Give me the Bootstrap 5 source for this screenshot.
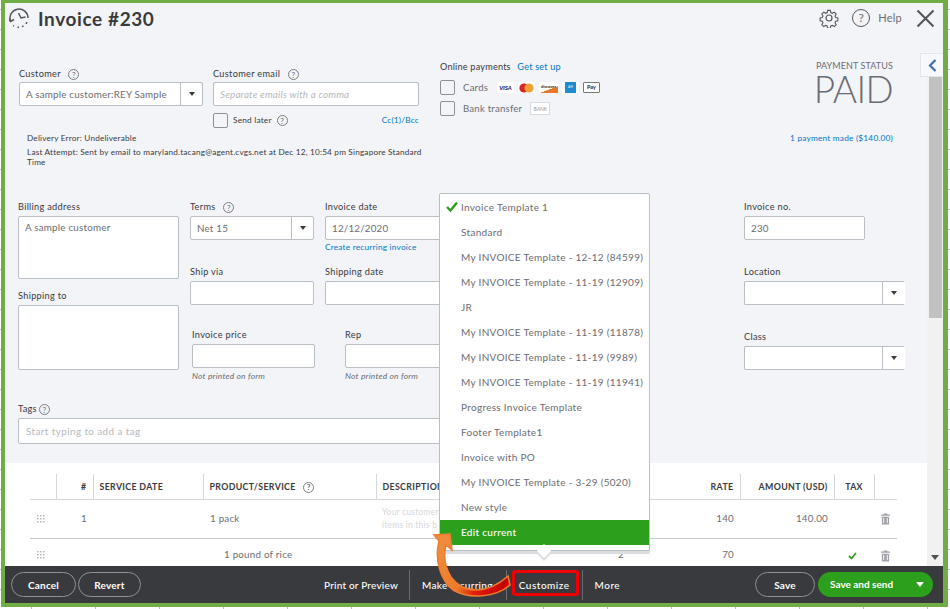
<!doctype html>
<html lang="en">
<head>
<meta charset="utf-8">
<title>Invoice #230</title>
<link rel="stylesheet" href="https://cdn.jsdelivr.net/npm/bootstrap@5.3.0/dist/css/bootstrap.min.css">
<style>
html,body{height:100%;overflow:hidden}
body{font-family:"Lato","Liberation Sans",sans-serif;font-size:9.6px;color:#393a3d;letter-spacing:.22px;line-height:1.2;
 background-color:#fff;background-image:repeating-linear-gradient(90deg,transparent 0 31px,#bbb 31px 32px,transparent 32px 64px),repeating-linear-gradient(0deg,transparent 0 19px,#bbb 19px 20px)}
.qb-frame{position:relative;width:947px;height:607px;margin-left:1px;border:solid #70ad47;border-width:3px 5px 5px 4px;background:#f3f4f8}
.qb-head{height:50px;padding:4px 8px 0 4px;display:flex;align-items:flex-start}
.qb-main{height:513px;overflow:hidden;display:flex}
.qb-content{width:922px;flex:none}
.qb-form{height:410px;background:#f3f4f8}
.qb-title{font-size:19px;font-weight:700;margin:0 0 0 7px;letter-spacing:.6px;color:#393a3d;line-height:24px}
.qb-tools{color:#6b6c72;font-size:11px;height:22px}
.qb-secA{height:146px;padding-left:14px;display:flex}
.qb-lab{display:block;height:17px;line-height:15px;margin:0;font-size:9.2px;color:#393a3d;letter-spacing:.3px;white-space:nowrap}
.qb-input{display:block;width:100%;height:24px;background:#fff;border:1px solid #babec5;border-radius:2px;font-size:9.8px;line-height:22px;padding:0 6px;color:#6b6c72;white-space:nowrap;overflow:hidden;letter-spacing:.2px}
.qb-ph{color:#b4b7bd;font-style:italic}
.qb-sel{display:flex;height:24px;background:#fff;border:1px solid #babec5;border-radius:2px;font-size:9.8px;line-height:22px;color:#6b6c72;letter-spacing:.2px}
.qb-open{border-right-color:#fff}
.qb-sel>span:first-child{flex:1 1 auto;padding-left:6px;white-space:nowrap;overflow:hidden}
.qb-car{flex:0 0 22px;border-left:1px solid #babec5;display:flex;align-items:center;justify-content:center}
.qb-car::after{content:"";border:3.5px solid transparent;border-top:4px solid #393a3d;border-bottom:0}
.qb-q{display:inline-flex;width:11px;height:11px;border:1px solid #7c7e84;border-radius:50%;font-size:8px;line-height:1;align-items:center;justify-content:center;color:#6b6c72;letter-spacing:0;vertical-align:middle;margin-left:5px}
.qb-box{display:block;width:15px;height:15px;border:1px solid #8d9096;border-radius:2px;background:#f3f4f8;flex:none}
.qb-link{color:#0077c5;text-decoration:none}
.qb-small{font-size:8.3px;letter-spacing:.2px}
.qb-note{font-size:8.2px;letter-spacing:.2px;line-height:10px;color:#393a3d;padding-left:8px;width:408px}
.qb-c1{width:184px}.qb-c2{width:206px;margin-left:10px}.qb-c3{margin-left:13px;width:240px}
.qb-status{margin-left:auto;margin-right:34px;text-align:right;width:200px;padding-top:8px}
.qb-status-t{font-size:9px;color:#6b6c72;letter-spacing:.1px}
.qb-paid{font-size:37px;font-weight:300;color:#6b6c72;line-height:36px;letter-spacing:-.6px;margin-top:-1px}
.qb-logo{display:inline-flex;align-items:center;justify-content:center;width:17px;height:11px;background:#fff;font-size:6px;font-weight:900;letter-spacing:0;overflow:hidden}
.qb-secB{height:202px;padding-left:13px;display:flex}
.qb-bc1{width:161px}.qb-bc2{width:124px;margin-left:11px}.qb-bc3{width:124px;margin-left:11px}.qb-bc4{width:161px;margin-left:275px}
.qb-ta{border:1px solid #babec5;border-radius:2px;background:#fff;padding:5px 6px;font-size:9.8px;color:#6b6c72}
.qb-hint{font-size:8.4px;font-style:italic;color:#6b6c72;margin-top:3px;white-space:nowrap}
.qb-tagrow{padding-left:13px}
.qb-tags{height:26px;width:600px;line-height:24px;color:#b4b7bd;padding-left:7px;letter-spacing:.45px}
.qb-lines{height:103px;background:#fff;padding:11px 0 0 25px;overflow:hidden}
.qb-tbl{table-layout:fixed;width:867px;border-collapse:collapse;margin:0;font-size:9.8px}
.qb-tbl th{height:25px;padding:2px 6px 0;font-size:8.8px;font-weight:700;color:#393a3d;letter-spacing:.35px;border-bottom:1px solid #d4d7dc;border-right:1px solid #d4d7dc;white-space:nowrap;overflow:hidden;vertical-align:middle;background:#fff}
.qb-tbl th:last-child{border-right:0}
.qb-tbl td{height:39px;padding:0 6px;border-bottom:1px solid #c4c6ca;white-space:nowrap;overflow:hidden;background:#fff;color:#6b6c72;vertical-align:middle}
.qb-tbl tr.qb-short td{height:34px;border-bottom:0}
.qb-tbl td.qb-drag{padding-left:7px;line-height:0}
.qb-bar{width:16px;flex:none;background:#f1f1f1;position:relative}
.qb-thumb{margin:24px 1px 0 2px;height:241px;background:#c1c1c1}
.qb-down{position:absolute;left:4px;bottom:6px;border:4px solid transparent;border-top:5px solid #505050;border-bottom:0}
.qb-foot{height:37px;background:#393a3d;color:#fff;padding:0 10px 0 6px;display:flex;align-items:center;font-size:10px;font-weight:500;letter-spacing:.2px}
.qb-pill{height:25px;border:1px solid #8d9096;border-radius:13px;background:transparent;color:#fff;font-size:10px;font-weight:700;padding:0;line-height:22px;letter-spacing:.2px}
.qb-sep{width:1px;height:30px;background:#6b6c72}
.qb-act{padding:0 12px;white-space:nowrap;position:relative}
.qb-act-w{letter-spacing:.3px;padding-right:13px}
.qb-act-c{letter-spacing:.5px}
.qb-green{height:25px;width:115px;border:0;border-radius:13px;background:#2ca01c;color:#fff;font-size:10px;font-weight:700;display:flex;align-items:center;justify-content:space-between;padding:0 9px 0 12px}
.qb-green i{border:4px solid transparent;border-top:5px solid #fff;border-bottom:0}
.qb-menu{position:absolute;left:434px;top:190px;width:211px;height:358px;display:block;margin:0;padding:1px 0 0;border:1px solid #babec5;border-radius:2px;background:#fff;box-shadow:0 3px 0 #dcdde0;min-width:0;z-index:5}
.qb-menu .dropdown-item{height:25px;line-height:25px;padding:0 0 0 21px;color:#6b6c72;font-size:10px;letter-spacing:.3px;position:relative}
.qb-menu .dropdown-item.active{background:#2ca01c;color:#fff;font-weight:500}
.qb-tick{position:absolute;left:6px;top:6px}
.qb-nub{position:absolute;left:99px;bottom:-6px;width:10px;height:10px;background:#fff;transform:rotate(45deg);box-shadow:2px 2px 0 #dcdde0}
.qb-tab{position:absolute;left:915px;top:50px;width:23px;height:24px;background:#f7f8fb;border:1px solid #e3e5ea;border-right:0;display:flex;align-items:center;justify-content:center;z-index:3}
.qb-redbox{position:absolute;left:507px;top:567px;width:67px;height:26px;border:3px solid #f00000;border-radius:3px;z-index:6;pointer-events:none}
.qb-curve{position:absolute;left:0;top:0;width:938px;height:600px;z-index:7;pointer-events:none}
</style>
</head>
<body>
<div class="qb-frame">
  <div class="qb-head">
    <svg width="22" height="22" viewBox="0 0 22 22" fill="none" stroke="#55565b" stroke-width="1.5"><path d="M1.500 14A9 9 0 1 1 19 11"/><path d="M18 15l-1 2M14.500 19l-1.500.6M10 20.300H8.500M5 19l-.8-.5"/><path d="M9.500 6l2.500 5 4.500-1"/><path d="M-.5 11l2 3.500 3.500-2"/></svg>
    <h1 class="qb-title">Invoice #230</h1>
    <div class="qb-tools ms-auto d-flex align-items-center">
      <svg width="20" height="20" viewBox="0 0 20 20" fill="none" stroke="#55565b" stroke-width="1.2"><circle cx="10" cy="10" r="3"/><path d="M8.500 1.500h3l.5 2.500 1.700.8 2.200-1.300 2.100 2.100-1.300 2.200.7 1.700 2.500.5v3l-2.500.5-.7 1.700 1.300 2.200-2.100 2.100-2.200-1.300-1.700.7-.5 2.500h-3l-.5-2.500-1.700-.7-2.200 1.300-2.100-2.100 1.300-2.200-.7-1.700-2.500-.5v-3l2.500-.5.7-1.700L2 5.600l2.100-2.100 2.200 1.300 1.700-.8z" transform="translate(1 1) scale(.9)"/></svg>
      <span class="d-inline-flex align-items-center justify-content-center" style="width:18px;height:18px;margin-left:13px;border:1.5px solid #55565b;border-radius:50%;font-size:12px;line-height:1">?</span>
      <span class="ms-2">Help</span>
      <svg width="19" height="19" style="margin-left:14px" viewBox="0 0 19 19" stroke="#55565b" stroke-width="2.100"><path d="M1.500 1.500l16 16M17.500 1.500l-16 16"/></svg>
    </div>
  </div>
  <div class="qb-main">
    <div class="qb-content">
      <div class="qb-form">
        <div class="qb-secA">
          <div style="width:408px">
            <div class="d-flex">
              <div class="qb-c1" style="padding-top:13px">
                <label class="qb-lab" style="height:16px">Customer <span class="qb-q">?</span></label>
                <div class="qb-sel"><span>A sample customer:REY Sample</span><span class="qb-car"></span></div>
              </div>
              <div class="qb-c2" style="padding-top:13px">
                <label class="qb-lab" style="height:16px">Customer email <span class="qb-q">?</span></label>
                <div class="qb-input qb-ph">Separate emails with a comma</div>
                <div class="d-flex align-items-center" style="margin-top:7px">
                  <span class="qb-box"></span><span class="qb-small" style="margin-left:5px">Send later</span><span class="qb-q">?</span>
                  <a class="qb-link qb-small ms-auto" href="#">Cc(1)/Bcc</a>
                </div>
              </div>
            </div>
            <div class="qb-note" style="margin-top:5px">Delivery Error: Undeliverable</div>
            <div class="qb-note" style="margin-top:4px">Last Attempt: Sent by email to maryland.tacang@agent.cvgs.net at Dec 12, 10:54 pm Singapore Standard Time</div>
          </div>
          <div class="qb-c3">
            <div style="padding-top:8px;font-size:9.1px;line-height:11px">Online payments <a class="qb-link ms-1" href="#">Get set up</a></div>
            <div class="d-flex align-items-center" style="margin-top:8px;height:15px">
              <span class="qb-box"></span><span class="ms-2" style="width:34px;color:#6b6c72">Cards</span>
              <span class="qb-logo" style="color:#1a2a70;font-style:italic">VISA</span>
              <span class="qb-logo ms-1"><svg width="15" height="10" viewBox="0 0 15 10"><circle cx="5" cy="5" r="4.600" fill="#d9222a"/><circle cx="10" cy="5" r="4.600" fill="#f0a030"/></svg></span>
              <span class="qb-logo ms-1" style="width:19px;font-size:4px;color:#333;background:linear-gradient(160deg,#fff 62%,#e8792b 63%)">discover</span>
              <span class="qb-logo ms-1"><span style="width:11px;height:11px;background:#1e8ad0;display:block;color:#cde;font-size:3px;text-align:center;line-height:11px">AM</span></span>
              <span class="qb-logo ms-1" style="border:1px solid #777;border-radius:1px;color:#222;font-weight:700;font-size:5.500px">Pay</span>
            </div>
            <div class="d-flex align-items-center" style="margin-top:6px;height:15px">
              <span class="qb-box"></span><span class="ms-2" style="color:#6b6c72">Bank transfer</span>
              <span class="qb-logo ms-2" style="width:20px;height:13px;border:1px solid #d8dade;color:#9a9ca2;font-size:5px;font-weight:400">BANK</span>
            </div>
          </div>
          <div class="qb-status">
            <div class="qb-status-t">PAYMENT STATUS</div>
            <div class="qb-paid">PAID</div>
            <a class="qb-link d-block qb-small" style="margin-top:27px" href="#">1 payment made ($140.00)</a>
          </div>
        </div>
        <div class="qb-secB">
          <div class="qb-bc1">
            <label class="qb-lab">Billing address</label>
            <div class="qb-ta" style="height:63px">A sample customer</div>
            <label class="qb-lab" style="margin-top:9px">Shipping to</label>
            <div class="qb-ta" style="height:65px"></div>
          </div>
          <div class="d-flex flex-column">
            <div class="d-flex">
              <div class="qb-bc2">
                <label class="qb-lab">Terms <span class="qb-q">?</span></label>
                <div class="qb-sel"><span>Net 15</span><span class="qb-car"></span></div>
                <label class="qb-lab" style="margin-top:24px">Ship via</label>
                <div class="qb-input"></div>
              </div>
              <div class="qb-bc3">
                <label class="qb-lab">Invoice date</label>
                <div class="qb-input">12/12/2020</div>
                <a class="qb-link qb-small d-block" style="margin-top:3px;height:21px" href="#">Create recurring invoice</a>
                <label class="qb-lab">Shipping date</label>
                <div class="qb-input"></div>
              </div>
            </div>
            <div class="d-flex" style="margin-top:22px;margin-left:13px">
              <div style="width:123px">
                <label class="qb-lab">Invoice price</label>
                <div class="qb-input"></div>
                <div class="qb-hint">Not printed on form</div>
              </div>
              <div style="width:124px;margin-left:30px">
                <label class="qb-lab">Rep</label>
                <div class="qb-input"></div>
                <div class="qb-hint">Not printed on form</div>
              </div>
            </div>
          </div>
          <div class="qb-bc4">
            <label class="qb-lab">Invoice no.</label>
            <div class="qb-input" style="width:121px">230</div>
            <label class="qb-lab" style="margin-top:24px">Location</label>
            <div class="qb-sel qb-open"><span></span><span class="qb-car"></span></div>
            <label class="qb-lab" style="margin-top:24px">Class</label>
            <div class="qb-sel qb-open"><span></span><span class="qb-car"></span></div>
          </div>
        </div>
        <div class="qb-tagrow">
          <label class="qb-lab">Tags<span class="qb-q" style="margin-left:2px">?</span></label>
          <div class="qb-input qb-tags">Start typing to add a tag</div>
        </div>
      </div>
      <div class="qb-lines">
        <table class="table qb-tbl">
          <colgroup><col style="width:26px"><col style="width:37px"><col style="width:110px"><col style="width:173px"><col style="width:184px"><col style="width:70px"><col style="width:110px"><col style="width:94px"><col style="width:40px"><col style="width:23px"></colgroup>
          <thead><tr><th></th><th class="text-end">#</th><th>SERVICE DATE</th><th>PRODUCT/SERVICE <span class="qb-q">?</span></th><th>DESCRIPTION</th><th></th><th class="text-end">RATE</th><th class="text-end">AMOUNT (USD)</th><th class="text-center">TAX</th><th></th></tr></thead>
          <tbody>
            <tr><td class="qb-drag"><svg width="8" height="8" viewBox="0 0 8 8" fill="#b4b7bd"><path d="M0 0h1.500v1.500H0zM3 0h1.500v1.500H3zM6 0h1.500v1.500H6zM0 3h1.500v1.500H0zM3 3h1.500v1.500H3zM6 3h1.500v1.500H6zM0 6h1.500v1.500H0zM3 6h1.500v1.500H3zM6 6h1.500v1.500H6z"/></svg></td><td class="text-end">1</td><td></td><td style="padding-left:7px">1 pack</td><td style="color:#d4d7dc;font-size:8.500px;line-height:13px">Your customer<br>items in this b</td><td></td><td class="text-end">140</td><td class="text-end">140.00</td><td></td><td class="text-center"><svg width="9" height="12" viewBox="0 0 10 12" fill="#a0a2a8"><path d="M3 0h4v1h3v1.500H0V1h3zM1 3.500h8V12H1zM2.500 5v5.500h1V5zM6.500 5v5.500h1V5z" fill-rule="evenodd"/></svg></td></tr>
            <tr class="qb-short"><td class="qb-drag"><svg width="8" height="8" viewBox="0 0 8 8" fill="#b4b7bd"><path d="M0 0h1.500v1.500H0zM3 0h1.500v1.500H3zM6 0h1.500v1.500H6zM0 3h1.500v1.500H0zM3 3h1.500v1.500H3zM6 3h1.500v1.500H6zM0 6h1.500v1.500H0zM3 6h1.500v1.500H3zM6 6h1.500v1.500H6z"/></svg></td><td></td><td></td><td style="padding-left:21px">1 pound of rice</td><td></td><td class="text-end">2</td><td class="text-end">70</td><td></td><td style="padding:0 0 0 14px"><svg width="9" height="8" viewBox="0 0 9 8" fill="none" stroke="#2ca01c" stroke-width="1.800"><path d="M1 4l2.500 2.500L8 1"/></svg></td><td class="text-center"><svg width="9" height="12" viewBox="0 0 10 12" fill="#a0a2a8"><path d="M3 0h4v1h3v1.500H0V1h3zM1 3.500h8V12H1zM2.500 5v5.500h1V5zM6.500 5v5.500h1V5z" fill-rule="evenodd"/></svg></td></tr>
          </tbody>
        </table>
      </div>
    </div>
    <div class="qb-bar"><div class="qb-thumb"></div><span class="qb-down"></span></div>
  </div>
  <div class="qb-foot">
    <button class="btn qb-pill" style="width:65px">Cancel</button>
    <button class="btn qb-pill" style="width:63px;margin-left:2px">Revert</button>
    <div class="d-flex align-items-center" style="margin-left:171px">
      <span class="qb-act" style="padding-right:11px">Print or Preview</span><span class="qb-sep"></span>
      <span class="qb-act qb-act-w">Make recurring</span><span class="qb-sep"></span>
      <span class="qb-act qb-act-c">Customize</span><span class="qb-sep"></span>
      <span class="qb-act qb-act-c">More</span>
    </div>
    <button class="btn qb-pill ms-auto" style="width:60px">Save</button>
    <button class="btn qb-green" style="margin-left:3px"><span>Save and send</span><i></i></button>
  </div>
  <ul class="dropdown-menu qb-menu list-unstyled">
    <li><a class="dropdown-item" href="#"><svg class="qb-tick" width="12" height="11" viewBox="0 0 12 11" fill="none" stroke="#2ca01c" stroke-width="2.400"><path d="M1 6l3.500 3.500L11 1.500"/></svg>Invoice Template 1</a></li>
    <li><a class="dropdown-item" href="#">Standard</a></li>
    <li><a class="dropdown-item" href="#">My INVOICE Template - 12-12 (84599)</a></li>
    <li><a class="dropdown-item" href="#">My INVOICE Template - 11-19 (12909)</a></li>
    <li><a class="dropdown-item" href="#">JR</a></li>
    <li><a class="dropdown-item" href="#">My INVOICE Template - 11-19 (11878)</a></li>
    <li><a class="dropdown-item" href="#">My INVOICE Template - 11-19 (9989)</a></li>
    <li><a class="dropdown-item" href="#">My INVOICE Template - 11-19 (11941)</a></li>
    <li><a class="dropdown-item" href="#">Progress Invoice Template</a></li>
    <li><a class="dropdown-item" href="#">Footer Template1</a></li>
    <li><a class="dropdown-item" href="#">Invoice with PO</a></li>
    <li><a class="dropdown-item" href="#">My INVOICE Template - 3-29 (5020)</a></li>
    <li><a class="dropdown-item" href="#">New style</a></li>
    <li><a class="dropdown-item active" href="#">Edit current</a></li>
    <li class="qb-nub" aria-hidden="true"></li>
  </ul>
  <div class="qb-tab"><svg width="9" height="13" viewBox="0 0 9 13" fill="none" stroke="#3f6fb5" stroke-width="2.200"><path d="M7.500 1L2 6.500 7.500 12"/></svg></div>
  <div class="qb-redbox"></div>
  <svg class="qb-curve" viewBox="5 3 938 600">
    <defs><linearGradient id="qbg" gradientUnits="userSpaceOnUse" x1="440" y1="550" x2="505" y2="585"><stop offset="0" stop-color="#f08a3c"/><stop offset=".45" stop-color="#ee7a28"/><stop offset=".68" stop-color="#e3200c"/><stop offset="1" stop-color="#c80000"/></linearGradient></defs>
    <path d="M508 576L510 585C496 597 470 600 453 590C441 581 434 560 439 541L434 535L450 534L452 550L446 545C443 557 446 569 451 577C464 595 488 594 508 576Z" fill="url(#qbg)" stroke="#ed7d31" stroke-width="1.500"/>
  </svg>
</div>
</body>
</html>
